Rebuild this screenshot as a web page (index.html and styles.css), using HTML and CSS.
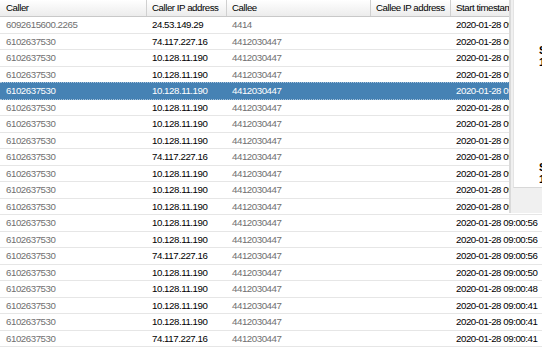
FILE: index.html
```html
<!DOCTYPE html>
<html>
<head>
<meta charset="utf-8">
<link rel="stylesheet" href="styles.css">
</head>
<body>
<div class="grid">
  <div class="row head">
    <div class="cell">Caller</div>
    <div class="cell">Caller IP address</div>
    <div class="cell">Callee</div>
    <div class="cell">Callee IP address</div>
    <div class="cell">Start timestamp</div>
  </div>
  <div class="row"><div class="cell dim">6092615600.2265</div><div class="cell">24.53.149.29</div><div class="cell dim">4414</div><div class="cell"></div><div class="cell">2020-01-28 09:01:40</div></div>
  <div class="row"><div class="cell dim">6102637530</div><div class="cell">74.117.227.16</div><div class="cell dim">4412030447</div><div class="cell"></div><div class="cell">2020-01-28 09:01:31</div></div>
  <div class="row"><div class="cell dim">6102637530</div><div class="cell">10.128.11.190</div><div class="cell dim">4412030447</div><div class="cell"></div><div class="cell">2020-01-28 09:01:29</div></div>
  <div class="row"><div class="cell dim">6102637530</div><div class="cell">10.128.11.190</div><div class="cell dim">4412030447</div><div class="cell"></div><div class="cell">2020-01-28 09:01:22</div></div>
  <div class="row sel"><div class="cell dim">6102637530</div><div class="cell">10.128.11.190</div><div class="cell dim">4412030447</div><div class="cell"></div><div class="cell">2020-01-28 09:01:20</div></div>
  <div class="row"><div class="cell dim">6102637530</div><div class="cell">10.128.11.190</div><div class="cell dim">4412030447</div><div class="cell"></div><div class="cell">2020-01-28 09:01:17</div></div>
  <div class="row"><div class="cell dim">6102637530</div><div class="cell">10.128.11.190</div><div class="cell dim">4412030447</div><div class="cell"></div><div class="cell">2020-01-28 09:01:12</div></div>
  <div class="row"><div class="cell dim">6102637530</div><div class="cell">10.128.11.190</div><div class="cell dim">4412030447</div><div class="cell"></div><div class="cell">2020-01-28 09:01:09</div></div>
  <div class="row"><div class="cell dim">6102637530</div><div class="cell">74.117.227.16</div><div class="cell dim">4412030447</div><div class="cell"></div><div class="cell">2020-01-28 09:01:05</div></div>
  <div class="row"><div class="cell dim">6102637530</div><div class="cell">10.128.11.190</div><div class="cell dim">4412030447</div><div class="cell"></div><div class="cell">2020-01-28 09:01:02</div></div>
  <div class="row"><div class="cell dim">6102637530</div><div class="cell">10.128.11.190</div><div class="cell dim">4412030447</div><div class="cell"></div><div class="cell">2020-01-28 09:01:00</div></div>
  <div class="row"><div class="cell dim">6102637530</div><div class="cell">10.128.11.190</div><div class="cell dim">4412030447</div><div class="cell"></div><div class="cell">2020-01-28 09:00:58</div></div>
  <div class="row"><div class="cell dim">6102637530</div><div class="cell">10.128.11.190</div><div class="cell dim">4412030447</div><div class="cell"></div><div class="cell">2020-01-28 09:00:56</div></div>
  <div class="row"><div class="cell dim">6102637530</div><div class="cell">10.128.11.190</div><div class="cell dim">4412030447</div><div class="cell"></div><div class="cell">2020-01-28 09:00:56</div></div>
  <div class="row"><div class="cell dim">6102637530</div><div class="cell">74.117.227.16</div><div class="cell dim">4412030447</div><div class="cell"></div><div class="cell">2020-01-28 09:00:56</div></div>
  <div class="row"><div class="cell dim">6102637530</div><div class="cell">10.128.11.190</div><div class="cell dim">4412030447</div><div class="cell"></div><div class="cell">2020-01-28 09:00:50</div></div>
  <div class="row"><div class="cell dim">6102637530</div><div class="cell">10.128.11.190</div><div class="cell dim">4412030447</div><div class="cell"></div><div class="cell">2020-01-28 09:00:48</div></div>
  <div class="row"><div class="cell dim">6102637530</div><div class="cell">10.128.11.190</div><div class="cell dim">4412030447</div><div class="cell"></div><div class="cell">2020-01-28 09:00:41</div></div>
  <div class="row"><div class="cell dim">6102637530</div><div class="cell">10.128.11.190</div><div class="cell dim">4412030447</div><div class="cell"></div><div class="cell">2020-01-28 09:00:41</div></div>
  <div class="row"><div class="cell dim">6102637530</div><div class="cell">74.117.227.16</div><div class="cell dim">4412030447</div><div class="cell"></div><div class="cell">2020-01-28 09:00:41</div></div>
</div>
<div class="panel">
  <div class="panel-body">
    <div class="stat"><b>Start</b><b>1</b></div>
    <div class="stat"><b>Start</b><b>1</b></div>
  </div>
  <div class="panel-foot"></div>
</div>
</body>
</html>
```
FILE: styles.css
```css
html, body {
  margin: 0;
  padding: 0;
  background: #fff;
  overflow: hidden;
}
body {
  font-family: "Liberation Sans", Arial, sans-serif;
  font-size: 9.7px;
  letter-spacing: -0.45px;
  color: #000;
  position: relative;
  width: 542px;
  height: 361px;
}
.grid {
  display: flex;
  flex-direction: column;
}
.row {
  display: grid;
  grid-template-columns: 147px 80px 144px 80px 1fr;
  height: 16.5px;
  box-sizing: border-box;
  border-bottom: 1px solid #e6e6e6;
  white-space: nowrap;
}
.cell {
  padding-left: 5px;
  overflow: hidden;
  line-height: 15.5px;
}
.cell:first-child {
  padding-left: 6px;
}
.dim {
  color: #707070;
}
.row.head {
  height: 17px;
  background: linear-gradient(#ffffff, #ececec);
  border-bottom: 1px solid #c8c8c8;
}
.row.head .cell {
  border-right: 1px solid #d0d0d0;
  line-height: 16px;
  color: #000;
}
.row.sel {
  background: #4682b4;
  border-top: 1px dotted #a9c3da;
  border-bottom: 1px dotted #a9c3da;
  margin-top: -1px;
  height: 17.5px;
}
.row.sel .cell {
  color: #fff;
  line-height: 15.5px;
}
.panel {
  position: absolute;
  left: 509px;
  top: 0;
  width: 60px;
  height: 213px;
  display: flex;
  flex-direction: column;
  background: #f0f0f0;
  border-left: 2px solid #dadada;
  box-sizing: border-box;
}
.panel-body {
  height: 188px;
  background: #fff;
  border-left: 1px solid #e4e4e4;
  border-bottom: 1px solid #d8d8d8;
  margin-left: 2px;
  box-sizing: border-box;
  padding-top: 44px;
  padding-left: 25px;
  display: flex;
  flex-direction: column;
  gap: 93px;
}
.stat {
  display: flex;
  flex-direction: column;
  font-size: 11px;
  letter-spacing: 0;
  line-height: 12px;
}
.panel-foot {
  flex: 1;
}
```
